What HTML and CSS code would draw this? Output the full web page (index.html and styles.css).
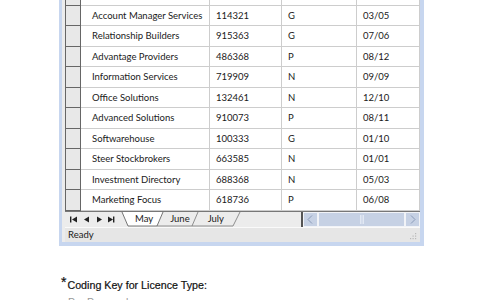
FILE: index.html
```html
<!DOCTYPE html>
<html lang="en">
<head>
  <meta charset="UTF-8">
  <title>Licence Sheet</title>
  <link rel="stylesheet" href="styles.css">
</head>
<body>
  <div class="window">
    <div class="grid">
      <div class="row"><div class="hdr"></div><div class="cell name"></div><div class="cell"></div><div class="cell"></div><div class="cell"></div></div>
      <div class="row"><div class="hdr"></div><div class="cell name">Account Manager Services</div><div class="cell">114321</div><div class="cell">G</div><div class="cell">03/05</div></div>
      <div class="row"><div class="hdr"></div><div class="cell name">Relationship Builders</div><div class="cell">915363</div><div class="cell">G</div><div class="cell">07/06</div></div>
      <div class="row"><div class="hdr"></div><div class="cell name">Advantage Providers</div><div class="cell">486368</div><div class="cell">P</div><div class="cell">08/12</div></div>
      <div class="row"><div class="hdr"></div><div class="cell name">Information Services</div><div class="cell">719909</div><div class="cell">N</div><div class="cell">09/09</div></div>
      <div class="row"><div class="hdr"></div><div class="cell name">Office Solutions</div><div class="cell">132461</div><div class="cell">N</div><div class="cell">12/10</div></div>
      <div class="row"><div class="hdr"></div><div class="cell name">Advanced Solutions</div><div class="cell">910073</div><div class="cell">P</div><div class="cell">08/11</div></div>
      <div class="row"><div class="hdr"></div><div class="cell name">Softwarehouse</div><div class="cell">100333</div><div class="cell">G</div><div class="cell">01/10</div></div>
      <div class="row"><div class="hdr"></div><div class="cell name">Steer Stockbrokers</div><div class="cell">663585</div><div class="cell">N</div><div class="cell">01/01</div></div>
      <div class="row"><div class="hdr"></div><div class="cell name">Investment Directory</div><div class="cell">688368</div><div class="cell">N</div><div class="cell">05/03</div></div>
      <div class="row"><div class="hdr"></div><div class="cell name">Marketing Focus</div><div class="cell">618736</div><div class="cell">P</div><div class="cell">06/08</div></div>
    </div>

    <div class="tab-strip">
      <svg class="nav" width="51" height="15" viewBox="0 0 51 15">
        <rect x="5" y="4.5" width="1.4" height="6" fill="#222"/>
        <polygon points="7,7.5 12,4.5 12,10.5" fill="#222"/>
        <polygon points="19,7.5 24,4.5 24,10.5" fill="#222"/>
        <polygon points="32,4.5 32,10.5 37,7.5" fill="#222"/>
        <polygon points="43,4.5 43,10.5 48,7.5" fill="#222"/>
        <rect x="48" y="4.5" width="1.4" height="6" fill="#222"/>
      </svg>
      <div class="tabs">
        <svg class="tab-lines" width="185" height="15" viewBox="0 0 185 15">
          <polygon points="6,0 47,0 41,14 12,14" fill="#fff"/>
          <polyline points="6,0 12,14 41,14 47,0" fill="none" stroke="#555" stroke-width="0.8"/>
          <polyline points="41,14 76,14 82,0" fill="none" stroke="#777" stroke-width="0.8"/>
          <polyline points="76,14 117,14 124,0" fill="none" stroke="#777" stroke-width="0.8"/>
        </svg>
        <span class="tab active">May</span>
        <span class="tab">June</span>
        <span class="tab">July</span>
      </div>
      <div class="splitter"></div>
      <div class="scrollbar">
        <div class="sb-btn">
          <svg width="13" height="13" viewBox="0 0 13 13"><polyline points="8,2.5 4,6.5 8,10.5" fill="none" stroke="#8b9cba" stroke-width="1"/></svg>
        </div>
        <div class="sb-thumb">
          <svg width="6" height="11" viewBox="0 0 6 11"><path d="M1.5 1v9M3 1v9M4.5 1v9" stroke="#e9eef6" stroke-width="0.8"/></svg>
        </div>
        <div class="sb-btn">
          <svg width="13" height="13" viewBox="0 0 13 13"><polyline points="5,2.5 9,6.5 5,10.5" fill="none" stroke="#8b9cba" stroke-width="1"/></svg>
        </div>
      </div>
    </div>

    <div class="status">
      <span>Ready</span>
      <svg class="grip" width="10" height="10" viewBox="0 0 10 10">
        <rect x="7" y="1" width="1.2" height="1.2" fill="#b8b8b8"/>
        <rect x="4.5" y="3.5" width="1.2" height="1.2" fill="#b8b8b8"/>
        <rect x="7" y="3.5" width="1.2" height="1.2" fill="#b8b8b8"/>
        <rect x="2" y="6" width="1.2" height="1.2" fill="#b8b8b8"/>
        <rect x="4.5" y="6" width="1.2" height="1.2" fill="#b8b8b8"/>
        <rect x="7" y="6" width="1.2" height="1.2" fill="#b8b8b8"/>
      </svg>
    </div>
  </div>

  <div class="key">
    <h4 class="key-title"><span class="star">*</span>Coding Key for Licence Type:</h4>
    <p class="key-line"><span class="code">P</span>Personal</p>
  </div>
</body>
</html>
```

FILE: styles.css
```css
body {
  margin: 0;
  background: #fff;
  font-family: Lato, "Open Sans", sans-serif;
  color: #1a1a1a;
  overflow: hidden;
}

.window {
  box-sizing: border-box;
  width: 365px;
  margin: -15px 0 0 59px;
  padding-left: 3px;
  background: #ececec;
  border: 4px solid #c7d6ef;
  border-left-width: 3px;
  border-top: none;
}

.row {
  display: grid;
  grid-template-columns: 16px 129px 72px 75px 63px;
  height: 20.5px;
}

.hdr {
  box-sizing: border-box;
  background: #e8e8e8;
  border-left: 1px solid #666;
  border-right: 1px solid #666;
  border-bottom: 1px solid #666;
}

.cell {
  box-sizing: border-box;
  display: flex;
  align-items: center;
  padding-left: 6px;
  background: #fff;
  font-size: 9.5px;
  border-right: 1px solid #cdcdcd;
  border-bottom: 1px solid #cdcdcd;
}

.cell.name {
  padding-left: 11px;
}

.tab-strip {
  display: flex;
  height: 16px;
  border-top: 1px solid #777;
  box-sizing: border-box;
  background: #ececec;
}

.nav {
  display: block;
  flex: none;
}

.tabs {
  position: relative;
  width: 185px;
  display: flex;
  font-size: 9.5px;
}

.tab-lines {
  position: absolute;
  top: 0;
  left: 0;
}

.tab {
  position: relative;
  line-height: 14px;
}

.tab.active {
  margin-left: 19px;
}

.tab:nth-child(3) {
  margin-left: 17px;
}

.tab:nth-child(4) {
  margin-left: 18px;
}

.splitter {
  width: 2px;
  background: #555;
}

.scrollbar {
  flex: 1;
  display: flex;
  gap: 2px;
  padding: 1px;
  background: #f1f3f7;
}

.sb-btn {
  width: 13px;
  display: flex;
  align-items: center;
  justify-content: center;
  background: #c6d1e4;
}

.sb-thumb {
  flex: 1;
  display: flex;
  align-items: center;
  justify-content: center;
  background: #c6d1e4;
}

.status {
  box-sizing: border-box;
  height: 15.5px;
  display: flex;
  align-items: center;
  justify-content: space-between;
  padding: 0 2px 0 3px;
  border-top: 1px solid #fafafa;
  background: #e6e6e6;
  font-size: 9.5px;
}

.grip {
  align-self: flex-end;
}

.key {
  margin: 29px 0 0 61px;
  font-family: "Liberation Sans", Arial, sans-serif;
}

.key-title {
  margin: 0;
  font-size: 10.7px;
  font-weight: normal;
  line-height: 15px;
  color: #111;
  -webkit-text-stroke: 0.2px #111;
}

.star {
  font-size: 14px;
  vertical-align: 2px;
  line-height: 1;
  margin-right: 1px;
}

.key-line {
  margin: 2px 0 0;
  padding-left: 7px;
  font-size: 10.5px;
  line-height: 15px;
  color: #999;
}

.code {
  display: inline-block;
  width: 19px;
}
```
